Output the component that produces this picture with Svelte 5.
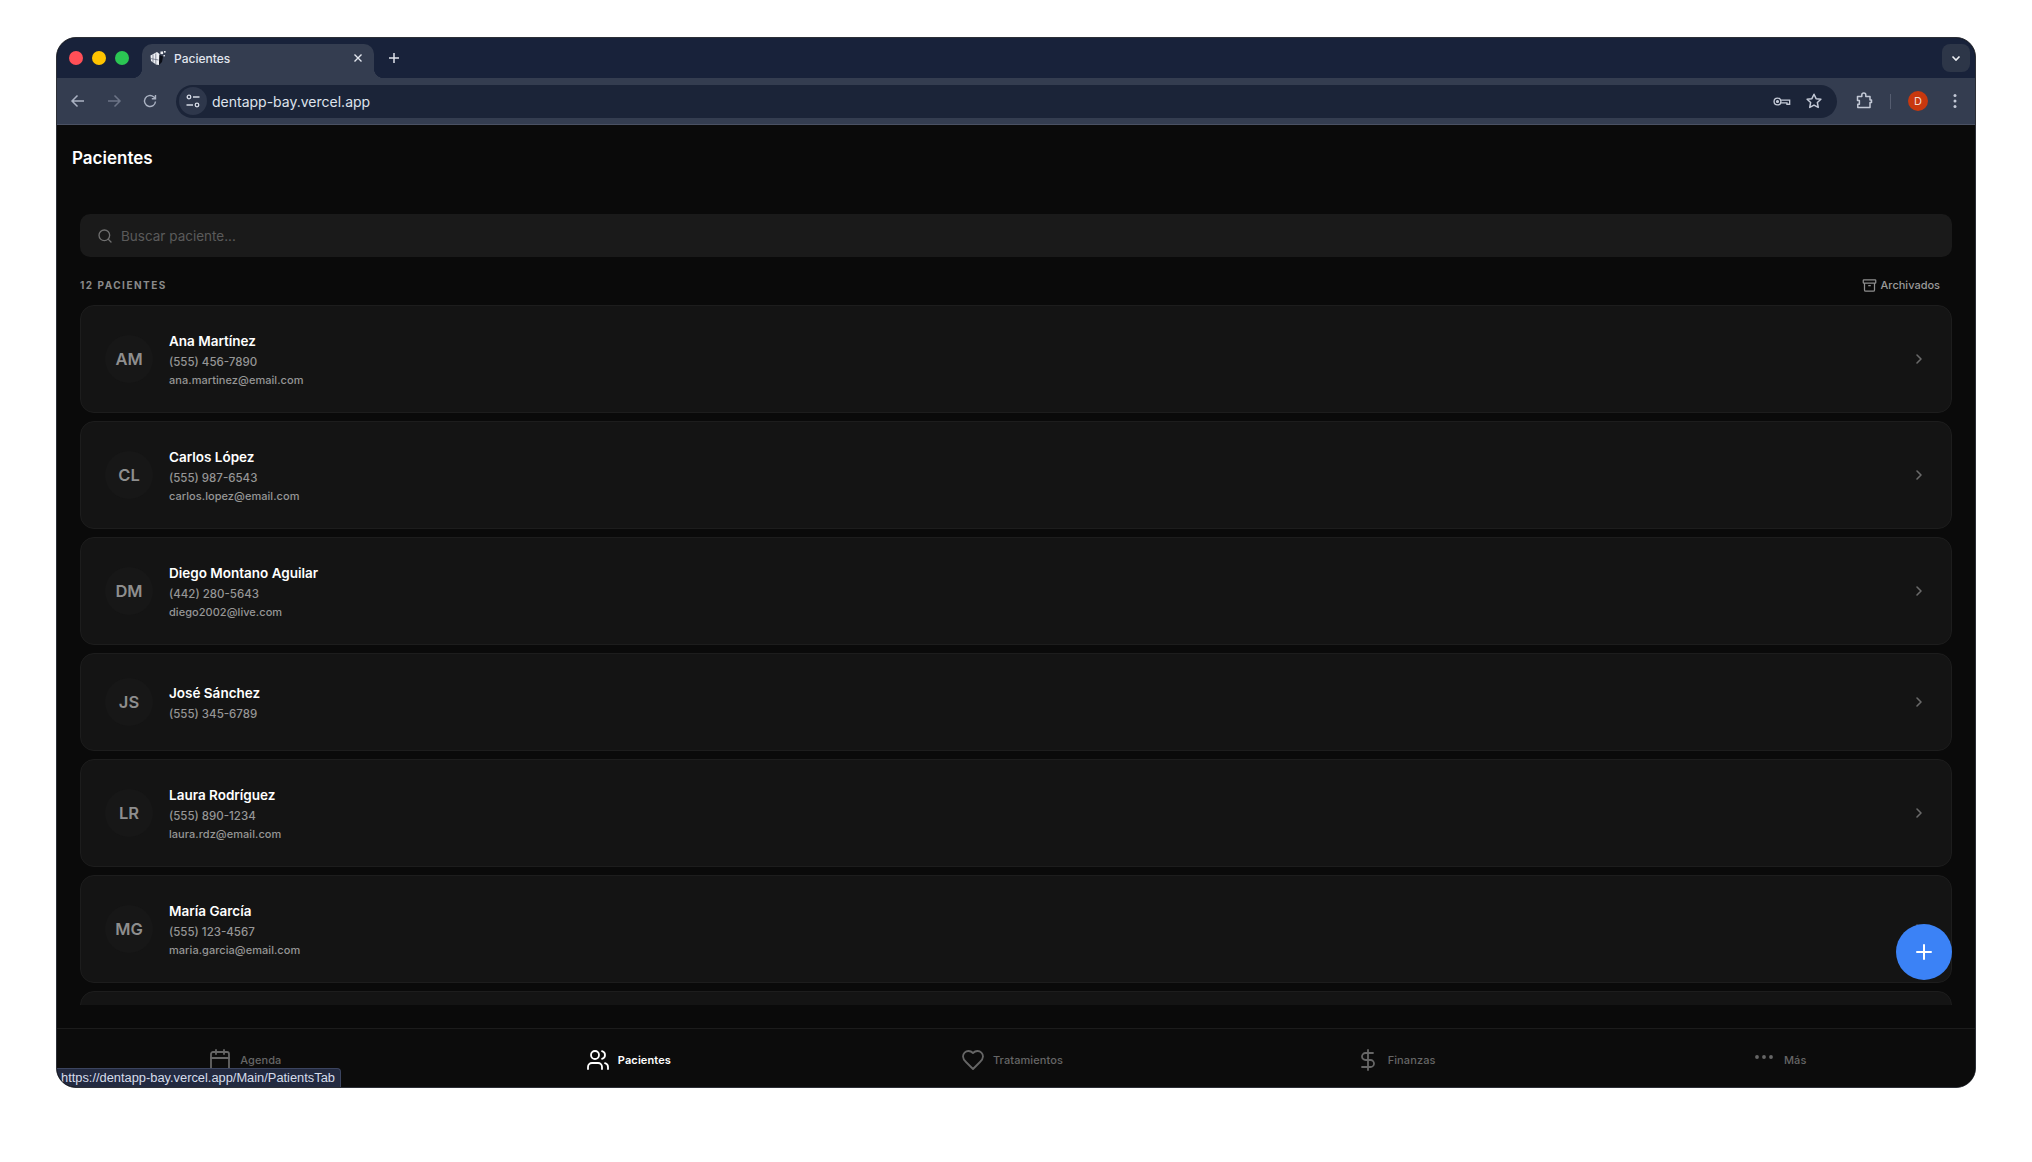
<script lang='ts'>
    const patients = [
        { initials: 'AM', name: 'Ana Martínez', phone: '(555) 456-7890', email: 'ana.martinez@email.com' },
        { initials: 'CL', name: 'Carlos López', phone: '(555) 987-6543', email: 'carlos.lopez@email.com' },
        { initials: 'DM', name: 'Diego Montano Aguilar', phone: '(442) 280-5643', email: 'diego2002@live.com' },
        { initials: 'JS', name: 'José Sánchez', phone: '(555) 345-6789', email: '' },
        { initials: 'LR', name: 'Laura Rodríguez', phone: '(555) 890-1234', email: 'laura.rdz@email.com' },
        { initials: 'MG', name: 'María García', phone: '(555) 123-4567', email: 'maria.garcia@email.com' },
        { initials: 'PR', name: 'Pedro Ramírez', phone: '(555) 234-5678', email: 'pedro.ramirez@email.com' }
    ];

    const tabs = [
        { label: 'Agenda', active: false, icon: 'calendar' },
        { label: 'Pacientes', active: true, icon: 'users' },
        { label: 'Tratamientos', active: false, icon: 'heart' },
        { label: 'Finanzas', active: false, icon: 'dollar' },
        { label: 'Más', active: false, icon: 'more' }
    ];
</script>

<div class="window">
    <div class="tabstrip">
        <div class="lights">
            <span class="light red"></span>
            <span class="light yellow"></span>
            <span class="light green"></span>
        </div>
        <div class="tab">
            <svg class="favicon" viewBox="0 0 16 16" width="16" height="16">
                <path d="M0.5 5.5L7 2l2.5 2-.5 11-3-.5-5-3.5z" fill="#eef0f4"/>
                <path d="M3 4.5v8M5.8 3.5v10.5M0.5 8.5l8 1.5" stroke="#5a6274" stroke-width="0.7" fill="none"/>
                <path d="M9.5 5l3.5 1.5-1 5.5-3 3z" fill="#0b0e16"/>
                <rect x="10.5" y="1.5" width="2.6" height="2.6" fill="#eef0f4"/>
                <rect x="14" y="1" width="1.6" height="1.6" fill="#eef0f4"/>
                <rect x="13.5" y="5" width="1.4" height="1.4" fill="#eef0f4"/>
            </svg>
            <span class="tab-title">Pacientes</span>
            <svg class="tab-close" viewBox="0 0 12 12" width="12" height="12"><path d="M2.5 2.5l7 7M9.5 2.5l-7 7" stroke="#e3e7ef" stroke-width="1.4" fill="none"/></svg>
        </div>
        <svg class="new-tab" viewBox="0 0 14 14" width="14" height="14"><path d="M7 2v10M2 7h10" stroke="#dfe3ec" stroke-width="1.5" fill="none"/></svg>
        <div class="tab-search">
            <svg viewBox="0 0 12 12" width="12" height="12"><path d="M2.5 4.5L6 8l3.5-3.5" stroke="#eef0f4" stroke-width="1.6" fill="none"/></svg>
        </div>
    </div>

    <div class="toolbar">
        <svg class="nav-btn" viewBox="0 0 16 16" width="16" height="16"><path d="M14 8H2.5M7.5 2.5L2 8l5.5 5.5" stroke="#aab2c2" stroke-width="1.5" fill="none"/></svg>
        <svg class="nav-btn dim" viewBox="0 0 16 16" width="16" height="16"><path d="M2 8h11.5M8.5 2.5L14 8l-5.5 5.5" stroke="#6c7486" stroke-width="1.5" fill="none"/></svg>
        <svg class="nav-btn" viewBox="0 0 16 16" width="16" height="16"><path d="M13.5 8.5A5.5 5.5 0 1 1 11.6 3.8L13.5 5.6M13.5 2v3.8H9.8" stroke="#aab2c2" stroke-width="1.4" fill="none"/></svg>
        <div class="omnibox">
            <div class="site-chip">
                <svg viewBox="0 0 16 16" width="16" height="16" fill="none" stroke="#d5dae5" stroke-width="1.3">
                    <circle cx="4" cy="4" r="1.8"/><path d="M8 4h6.5M1.5 12H8"/><circle cx="12" cy="12" r="1.8"/>
                </svg>
            </div>
            <span class="url">dentapp-bay.vercel.app</span>
            <svg class="key" viewBox="0 0 20 12" width="18" height="11" fill="none" stroke="#c3c9d6" stroke-width="1.5">
                <circle cx="5" cy="6" r="3.8"/><circle cx="5" cy="6" r="1" fill="#c3c9d6"/><path d="M9 4.5h9.5V9h-3V7.5h-2V7.5H9"/>
            </svg>
            <svg class="omni-icon" viewBox="0 0 24 24" width="18" height="18" fill="none" stroke="#c3c9d6" stroke-width="2" stroke-linejoin="round">
                <path d="M12 3l2.8 5.9 6.4.8-4.7 4.4 1.2 6.4L12 17.4l-5.7 3.1 1.2-6.4-4.7-4.4 6.4-.8z"/>
            </svg>
        </div>
        <svg class="extension" viewBox="0 0 18 18" width="18" height="18" fill="none" stroke="#c3c9d6" stroke-width="1.5" stroke-linejoin="round">
            <path d="M2.5 4.5H6.8V3a2 2 0 0 1 4 0v1.5h4.2V8h1.5v2.5H15v5H2.8v-3.2H4.4V8.5H2.5z"/>
        </svg>
        <span class="tool-divider"></span>
        <span class="profile">D</span>
        <svg class="dots" viewBox="0 0 4 16" width="4" height="16"><circle cx="2" cy="2.5" r="1.5" fill="#c3c9d6"/><circle cx="2" cy="8" r="1.5" fill="#c3c9d6"/><circle cx="2" cy="13.5" r="1.5" fill="#c3c9d6"/></svg>
    </div>

    <div class="app">
        <h1>Pacientes</h1>

        <div class="search">
            <svg viewBox="0 0 24 24" width="16" height="16" fill="none" stroke="#6f6f6f" stroke-width="2" stroke-linecap="round"><circle cx="11" cy="11" r="8"/><path d="M21 21l-4.3-4.3"/></svg>
            <span>Buscar paciente...</span>
        </div>

        <div class="list-head">
            <span class="count">12 PACIENTES</span>
            <span class="archived">
                <svg viewBox="0 0 24 24" width="15" height="15" fill="none" stroke="#8e8e8e" stroke-width="2"><rect x="2" y="3" width="20" height="5" rx="1"/><path d="M4 8v11a2 2 0 0 0 2 2h12a2 2 0 0 0 2-2V8M10 12h4"/></svg>
                Archivados
            </span>
        </div>

        <div class="list">
            {#each patients as p}
                <div class="card">
                    <div class="avatar">{p.initials}</div>
                    <div class="info">
                        <div class="name">{p.name}</div>
                        <div class="phone">{p.phone}</div>
                        {#if p.email}
                            <div class="email">{p.email}</div>
                        {/if}
                    </div>
                    <svg class="chevron" viewBox="0 0 24 24" width="16" height="16" fill="none" stroke="#6a6a6a" stroke-width="2.4" stroke-linecap="round" stroke-linejoin="round"><path d="M9 6l6 6-6 6"/></svg>
                </div>
            {/each}
        </div>

        <nav class="bottom">
            {#each tabs as t}
                <div class="nav-item" class:active={t.active}>
                    <svg viewBox="0 0 24 24" width="24" height="24" fill="none" stroke="currentColor" stroke-width="1.8" stroke-linecap="round" stroke-linejoin="round">
                        {#if t.icon === 'calendar'}
                            <path d="M8 2v4M16 2v4M3 10h18"/><rect x="3" y="4" width="18" height="18" rx="2"/>
                        {:else if t.icon === 'users'}
                            <path d="M16 21v-2a4 4 0 0 0-4-4H6a4 4 0 0 0-4 4v2M22 21v-2a4 4 0 0 0-3-3.87M16 3.13a4 4 0 0 1 0 7.75"/><circle cx="9" cy="7" r="4"/>
                        {:else if t.icon === 'heart'}
                            <path d="M19 14c1.49-1.46 3-3.21 3-5.5A5.5 5.5 0 0 0 16.5 3c-1.76 0-3 .5-4.5 2-1.5-1.5-2.74-2-4.5-2A5.5 5.5 0 0 0 2 8.5c0 2.3 1.5 4.05 3 5.5l7 7Z"/>
                        {:else if t.icon === 'dollar'}
                            <path d="M12 2v20M17 5H9.5a3.5 3.5 0 0 0 0 7h5a3.5 3.5 0 0 1 0 7H6"/>
                        {:else}
                            <circle cx="5" cy="9" r="1"/><circle cx="12" cy="9" r="1"/><circle cx="19" cy="9" r="1"/>
                        {/if}
                    </svg>
                    <span>{t.label}</span>
                </div>
            {/each}
        </nav>

        <button class="fab" aria-label="Nuevo paciente">
            <svg viewBox="0 0 24 24" width="24" height="24" fill="none" stroke="#fff" stroke-width="2" stroke-linecap="round"><path d="M12 5v14M5 12h14"/></svg>
        </button>

        <div class="status">https://dentapp-bay.vercel.app/Main/PatientsTab</div>
    </div>
</div>

<style>
    :global(body) {
        background: #fff;
    }

    .window {
        box-sizing: border-box;
        width: 1920px;
        height: 1051px;
        margin: 37px 0 0 56px;
        display: flex;
        flex-direction: column;
        border-radius: 20px;
        overflow: hidden;
        background: #0a0a0a;
        border: 1px solid #2c2f36;
        font-family: Inter, "Liberation Sans", sans-serif;
    }

    /* chrome */
    .tabstrip {
        height: 40px;
        display: flex;
        align-items: flex-end;
        background: #18223a;
        flex-shrink: 0;
    }

    .lights {
        display: flex;
        gap: 9px;
        align-self: center;
        padding: 0 0 0 12px;
        width: 73px;
    }

    .light {
        width: 14px;
        height: 14px;
        border-radius: 50%;
    }

    .red { background: #ff4f57; }
    .yellow { background: #ffc400; }
    .green { background: #2bc653; }

    .tab {
        position: relative;
        box-sizing: border-box;
        width: 232px;
        height: 34px;
        padding: 0 10px 6px 8px;
        display: flex;
        align-items: center;
        gap: 8px;
        background: #343d50;
        border-radius: 10px 10px 0 0;
    }

    .tab::before,
    .tab::after {
        content: '';
        position: absolute;
        bottom: 0;
        width: 10px;
        height: 10px;
    }

    .tab::before {
        left: -10px;
        background: radial-gradient(circle at 0 0, transparent 10px, #343d50 10.5px);
    }

    .tab::after {
        right: -10px;
        background: radial-gradient(circle at 100% 0, transparent 10px, #343d50 10.5px);
    }

    .tab-title {
        flex: 1;
        font-size: 12px;
        font-weight: 500;
        color: #e1e5ee;
    }

    .new-tab {
        align-self: center;
        margin-left: 13px;
    }

    .tab-search {
        margin: 0 5px 6px auto;
        width: 28px;
        height: 28px;
        border-radius: 8px;
        background: #2d3648;
        display: flex;
        align-items: center;
        justify-content: center;
    }

    .toolbar {
        height: 47px;
        flex-shrink: 0;
        display: flex;
        align-items: center;
        padding: 0 0 0 13px;
        background: #343d50;
        border-bottom: 1px solid #4a5163;
        box-sizing: border-box;
    }

    .nav-btn {
        margin-right: 20px;
    }

    .nav-btn:nth-child(3) {
        margin-right: 18px;
    }

    .omnibox {
        width: 1661px;
        height: 33px;
        padding: 0 14px 0 3px;
        box-sizing: border-box;
        display: flex;
        align-items: center;
        gap: 12px;
        border-radius: 17px;
        background: #1b2438;
    }

    .site-chip {
        width: 28px;
        height: 28px;
        border-radius: 50%;
        background: #2e374b;
        display: flex;
        align-items: center;
        justify-content: center;
        margin-right: -7px;
    }

    .url {
        flex: 1;
        font-size: 14px;
        color: #dfe3ec;
    }

    .key {
        margin-right: 2px;
    }

    .extension {
        margin-left: 18px;
    }

    .tool-divider {
        width: 1px;
        height: 15px;
        margin: 0 17px;
        background: #555d70;
    }

    .profile {
        width: 20px;
        height: 20px;
        border-radius: 50%;
        background: #c8380e;
        color: #f5dcd2;
        font-size: 11px;
        display: flex;
        align-items: center;
        justify-content: center;
    }

    .dots {
        margin-left: 25px;
    }

    /* app */
    .app {
        position: relative;
        flex: 1;
        min-height: 0;
        display: flex;
        flex-direction: column;
        background: #0a0a0a;
    }

    h1 {
        margin: 0;
        padding: 21px 15px 0;
        font-size: 17px;
        line-height: 24px;
        font-weight: 600;
        color: #fff;
    }

    .search {
        height: 43px;
        margin: 44px 23px 0;
        padding: 0 17px;
        flex-shrink: 0;
        display: flex;
        align-items: center;
        gap: 8px;
        box-sizing: border-box;
        border-radius: 10px;
        background: #1a1a1a;
        font-size: 13.5px;
        color: #5a5a5a;
    }

    .list-head {
        margin: 0 23px;
        padding: 20px 12px 12px 0;
        height: 48px;
        box-sizing: border-box;
        flex-shrink: 0;
        display: flex;
        align-items: center;
        justify-content: space-between;
    }

    .count {
        font-size: 10px;
        font-weight: 700;
        letter-spacing: 1.5px;
        color: #8a8a8a;
    }

    .archived {
        display: flex;
        align-items: center;
        gap: 4px;
        font-size: 11px;
        font-weight: 500;
        color: #9a9a9a;
    }

    .list {
        flex: 1;
        min-height: 0;
        margin: 0 23px 23px;
        display: flex;
        flex-direction: column;
        gap: 8px;
        overflow: hidden;
    }

    .card {
        flex-shrink: 0;
        display: flex;
        align-items: center;
        gap: 16px;
        padding: 24px;
        border: 1px solid #1d1d1d;
        border-radius: 14px;
        background: #141414;
    }

    .avatar {
        width: 48px;
        height: 48px;
        border-radius: 50%;
        background: #171717;
        color: #8e8e8e;
        font-size: 16.5px;
        font-weight: 600;
        display: flex;
        align-items: center;
        justify-content: center;
        flex-shrink: 0;
    }

    .info {
        flex: 1;
        padding-top: 1px;
        margin-bottom: -1px;
    }

    .name {
        font-size: 13.5px;
        line-height: 20px;
        font-weight: 600;
        color: #fff;
    }

    .phone {
        margin-top: 2px;
        font-size: 11.5px;
        line-height: 18px;
        font-weight: 500;
        color: #969696;
    }

    .email {
        font-size: 11px;
        line-height: 18px;
        letter-spacing: 0.05px;
        font-weight: 500;
        color: #969696;
    }

    .bottom {
        height: 59px;
        flex-shrink: 0;
        box-sizing: border-box;
        border-top: 1px solid #1c1c1c;
        display: grid;
        grid-template-columns: repeat(5, 1fr);
        background: #0c0c0c;
    }

    .nav-item {
        display: flex;
        align-items: center;
        justify-content: center;
        gap: 8px;
        padding: 3px 8px 0 0;
        font-size: 11px;
        letter-spacing: 0.1px;
        font-weight: 500;
        color: #666;
    }

    .nav-item.active {
        color: #fff;
        font-weight: 600;
    }

    .fab {
        position: absolute;
        right: 23px;
        bottom: 107px;
        width: 56px;
        height: 56px;
        padding: 0;
        border: none;
        border-radius: 50%;
        background: #3b82f6;
        display: flex;
        align-items: center;
        justify-content: center;
    }

    .status {
        position: absolute;
        left: 0;
        bottom: 0;
        box-sizing: border-box;
        width: 284px;
        height: 19px;
        padding: 0 4px;
        font-family: "Liberation Sans", sans-serif;
        font-size: 12.85px;
        line-height: 18px;
        white-space: nowrap;
        color: #d5dcea;
        background: #232a40;
        border: 1px solid #3c4560;
        border-left: none;
        border-bottom: none;
        border-radius: 0 4px 0 0;
    }
</style>
